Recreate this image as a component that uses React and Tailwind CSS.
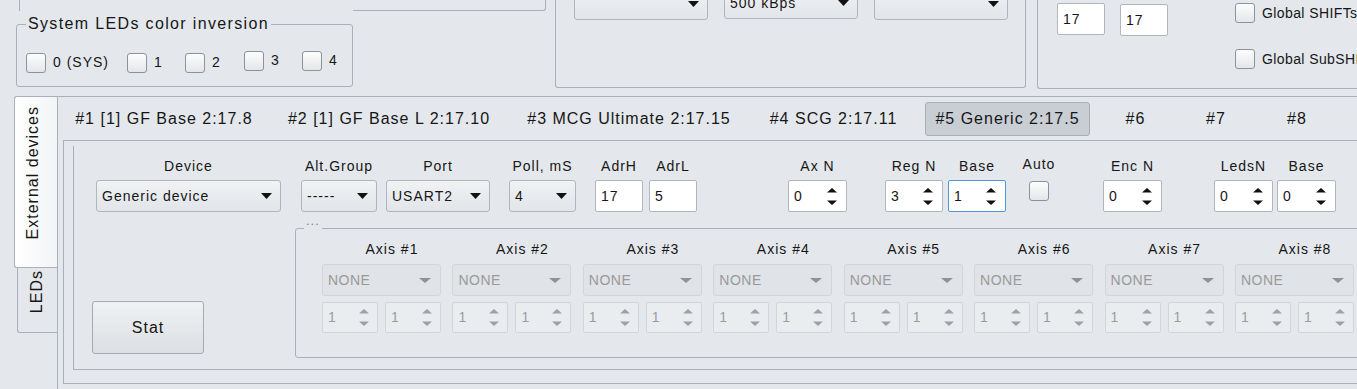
import React from "react";

const BORDER = "border-[#abb0b8]";
const BG = "bg-[#e4e8ec]";

function Arrow({ disabled }) {
  return disabled ? (
    <svg width="12" height="5" viewBox="0 0 12 5" className="shrink-0">
      <polygon points="0,0 12,0 6,5" fill="#8f9398" />
    </svg>
  ) : (
    <svg width="11" height="6" viewBox="0 0 11 6" className="shrink-0">
      <polygon points="0,0 11,0 5.5,6" fill="#111" />
    </svg>
  );
}

function SpinArrows({ disabled }) {
  const c = disabled ? "#9da1a6" : "#111";
  return (
    <svg width="10" height="17" viewBox="0 0 10 17" className="shrink-0">
      <polygon points="5,0 10,4.5 0,4.5" fill={c} />
      <polygon points="0,12.5 10,12.5 5,17" fill={c} />
    </svg>
  );
}

function Checkbox() {
  return (
    <div className="w-[20px] h-[20px] shrink-0 rounded-[3px] border border-[#8d939b] bg-gradient-to-b from-[#fdfdfd] to-[#e4e6e9]" />
  );
}

function Combo({ w, text, className = "" }) {
  return (
    <div
      className={`${w} h-[32px] shrink-0 flex items-center justify-between pl-[5px] pr-[8px] border border-[#b1b6bd] rounded-[3px] bg-gradient-to-b from-[#f0f2f4] to-[#e2e5e9] ${className}`}
    >
      <span className="whitespace-nowrap">{text}</span>
      <Arrow />
    </div>
  );
}

function DisabledCombo() {
  return (
    <div className="w-full h-[32px] flex items-center justify-between pl-[5px] pr-[9px] border border-[#d2d6db] rounded-[3px] bg-[#e0e3e7] text-[#9a9a9a]">
      <span className="whitespace-nowrap tracking-[0.5px]">NONE</span>
      <Arrow disabled />
    </div>
  );
}

function Input({ w, value, className = "" }) {
  return (
    <div
      className={`${w} h-[32px] shrink-0 flex items-center pl-[5px] bg-white border border-[#b1b6bd] rounded-[2px] ${className}`}
    >
      {value}
    </div>
  );
}

function Spin({ value, focused }) {
  return (
    <div
      className={`w-full h-[32px] flex items-center justify-between pl-[5px] pr-[9px] bg-white border rounded-[2px] ${
        focused ? "border-[#4a97e0]" : "border-[#b1b6bd]"
      }`}
    >
      <span>{value}</span>
      <SpinArrows />
    </div>
  );
}

function DisabledSpin() {
  return (
    <div className="w-[56px] h-[31px] flex items-center justify-between pl-[5px] pr-[8px] bg-[#eaedf0] border border-[#d2d6db] rounded-[2px] text-[#9c9c9c]">
      <span>1</span>
      <SpinArrows disabled />
    </div>
  );
}

function Col({ ml, w, label, children }) {
  return (
    <div className={`${ml} ${w} shrink-0 flex flex-col items-center`}>
      <div className="h-[18px] leading-[18px] mb-[5px] whitespace-nowrap">{label}</div>
      {children}
    </div>
  );
}

function CheckItem({ label, w, up }) {
  return (
    <div className={`${w} shrink-0 flex items-center ${up ? "-mt-[2px]" : ""}`}>
      <Checkbox />
      <span className="ml-[7px] whitespace-nowrap">{label}</span>
    </div>
  );
}

const TABS = [
  { w: "w-[212px]", t: "#1 [1] GF Base 2:17.8" },
  { w: "w-[238px]", t: "#2 [1] GF Base L 2:17.10" },
  { w: "w-[242px]", t: "#3 MCG Ultimate 2:17.15" },
  { w: "w-[167px]", t: "#4 SCG 2:17.11" },
  { w: "w-[181px]", t: "#5 Generic 2:17.5", sel: true },
  { w: "w-[75px]", t: "#6" },
  { w: "w-[86px]", t: "#7" },
  { w: "w-[76px]", t: "#8" },
];

export default function App() {
  return (
    <div
      className={`w-[1357px] h-[389px] overflow-hidden ${BG} text-[#161616] font-['Liberation_Sans',Arial,sans-serif] text-[14px] tracking-[1px] flex flex-col`}
    >
      {/* Top area */}
      <div className="h-[96px] flex shrink-0">
        <div className="w-[555px] shrink-0 flex flex-col">
          <div className="ml-[19px] w-[527px] h-[11px] flex">
            <div className={`w-[334px] border-l ${BORDER}`} />
            <div className={`flex-1 border-b border-r ${BORDER} rounded-br-[3px]`} />
          </div>
          <div className={`relative mt-[13px] ml-[16px] w-[337px] h-[63px] border ${BORDER} rounded-[3px]`}>
            <span className={`absolute -top-[11px] left-[9px] px-[2px] ${BG} text-[16px] tracking-[1.35px] leading-[20px] whitespace-nowrap`}>
              System LEDs color inversion
            </span>
            <div className="flex items-start pt-[27px] pl-[9px]">
              <CheckItem w="w-[101px]" label="0 (SYS)" />
              <CheckItem w="w-[58px]" label="1" />
              <CheckItem w="w-[59px]" label="2" />
              <CheckItem w="w-[58px]" label="3" up />
              <CheckItem w="w-[40px]" label="4" up />
            </div>
          </div>
        </div>

        <div className={`w-[471px] h-[88px] shrink-0 border-l border-r border-b ${BORDER} rounded-b-[3px] flex items-start gap-[16px] pl-[18px]`}>
          <Combo w="w-[134px]" text="" className="-mt-[12px]" />
          <Combo w="w-[134px]" text="500 kBps" className="-mt-[13px]" />
          <Combo w="w-[134px]" text="" className="-mt-[12px]" />
        </div>

        <div className={`ml-[11px] w-[340px] h-[89px] shrink-0 border-l border-b ${BORDER} rounded-bl-[3px] flex items-start pl-[19px]`}>
          <Input w="w-[48px]" value="17" className="mt-[3px]" />
          <Input w="w-[48px]" value="17" className="mt-[4px] ml-[15px]" />
          <div className="ml-[67px] flex flex-col pt-[3px] tracking-[0.4px]">
            <div className="flex items-center h-[20px]">
              <Checkbox />
              <span className="ml-[7px] whitespace-nowrap">Global SHIFTs</span>
            </div>
            <div className="flex items-center h-[20px] mt-[26px]">
              <Checkbox />
              <span className="ml-[7px] whitespace-nowrap">Global SubSHIFTs</span>
            </div>
          </div>
        </div>
      </div>

      {/* Main area */}
      <div className="flex flex-1 min-h-0">
        <div className="w-[57px] shrink-0 flex flex-col">
          <div
            className={`ml-[14px] w-[43px] h-[172px] border-t border-l border-b ${BORDER} rounded-l-[3px] bg-gradient-to-r from-[#ffffff] to-[#f3f4f6] flex items-center justify-center pb-[19px] pr-[6px]`}
          >
            <span className="[writing-mode:vertical-rl] rotate-180 whitespace-nowrap text-[16px] leading-[18px]">
              External devices
            </span>
          </div>
          <div
            className={`ml-[17px] w-[40px] h-[65px] border-l border-b ${BORDER} rounded-bl-[3px] flex items-center justify-center pb-[16px] pr-[2px]`}
          >
            <span className="[writing-mode:vertical-rl] rotate-180 whitespace-nowrap text-[16px] leading-[18px]">
              LEDs
            </span>
          </div>
        </div>

        <div className={`flex-1 min-w-0 border-l border-t ${BORDER} flex flex-col`}>
          <div className="h-[43px] shrink-0 flex items-center text-[16px]">
            {TABS.map((t) =>
              t.sel ? (
                <div key={t.t} className={`${t.w} shrink-0 px-[8px]`}>
                  <div className="h-[34px] flex items-center justify-center bg-[#c9cdd4] border border-[#a9afb8] rounded-[3px] whitespace-nowrap">
                    {t.t}
                  </div>
                </div>
              ) : (
                <div key={t.t} className={`${t.w} shrink-0 text-center whitespace-nowrap`}>
                  {t.t}
                </div>
              )
            )}
          </div>

          <div className={`ml-[5px] h-[244px] shrink-0 border-l border-t border-b ${BORDER} flex flex-col`}>
            <div className={`ml-[9px] mt-[5px] h-[224px] shrink-0 border-l border-b ${BORDER} flex flex-col`}>
              {/* controls row */}
              <div className="flex items-start pt-[11px]">
                <Col ml="ml-[22px]" w="w-[185px]" label="Device">
                  <Combo w="w-full" text="Generic device" />
                </Col>
                <Col ml="ml-[20px]" w="w-[76px]" label="Alt.Group">
                  <Combo w="w-full" text="-----" />
                </Col>
                <Col ml="ml-[9px]" w="w-[104px]" label="Port">
                  <Combo w="w-full" text="USART2" />
                </Col>
                <Col ml="ml-[19px]" w="w-[67px]" label="Poll, mS">
                  <Combo w="w-full" text="4" />
                </Col>
                <Col ml="ml-[19px]" w="w-[48px]" label="AdrH">
                  <Input w="w-full" value="17" />
                </Col>
                <Col ml="ml-[6px]" w="w-[48px]" label="AdrL">
                  <Input w="w-full" value="5" />
                </Col>
                <Col ml="ml-[91px]" w="w-[59px]" label="Ax N">
                  <Spin value="0" />
                </Col>
                <Col ml="ml-[38px]" w="w-[58px]" label="Reg N">
                  <Spin value="3" />
                </Col>
                <Col ml="ml-[5px]" w="w-[58px]" label="Base">
                  <Spin value="1" focused />
                </Col>
                <div className="ml-[15px] w-[36px] shrink-0 flex flex-col items-center">
                  <div className="h-[18px] leading-[18px] -mt-[2px] mb-[8px]">Auto</div>
                  <Checkbox />
                </div>
                <Col ml="ml-[46px]" w="w-[59px]" label="Enc N">
                  <Spin value="0" />
                </Col>
                <Col ml="ml-[52px]" w="w-[59px]" label="LedsN">
                  <Spin value="0" />
                </Col>
                <Col ml="ml-[4px]" w="w-[59px]" label="Base">
                  <Spin value="0" />
                </Col>
              </div>

              {/* lower row */}
              <div className="flex items-end mt-[16px]">
                <button className="ml-[18px] mb-[4px] w-[112px] h-[53px] shrink-0 border border-[#a6abb3] rounded-[3px] bg-gradient-to-b from-[#eff1f3] to-[#dcdfe3] text-[16px] tracking-[1px] text-[#161616]">
                  Stat
                </button>
                <div className={`relative ml-[91px] w-[1100px] h-[130px] shrink-0 border ${BORDER} rounded-[3px]`}>
                  <span className={`absolute -top-[13px] left-[8px] px-[2px] ${BG} text-[13px] leading-[10px] pb-[10px] text-[#8a7f70]`}>
                    ...
                  </span>
                  <div className="grid grid-cols-[repeat(8,119px)] gap-x-[11.43px] pl-[26px] pt-[12px]">
                    {[1, 2, 3, 4, 5, 6, 7, 8].map((n) => (
                      <div key={n} className="flex flex-col">
                        <div className="h-[16px] leading-[16px] text-center pl-[21px] whitespace-nowrap">
                          Axis #{n}
                        </div>
                        <div className="mt-[7px]">
                          <DisabledCombo />
                        </div>
                        <div className="flex gap-[7px] mt-[6px]">
                          <DisabledSpin />
                          <DisabledSpin />
                        </div>
                      </div>
                    ))}
                  </div>
                </div>
              </div>
            </div>
          </div>
        </div>
      </div>
    </div>
  );
}
